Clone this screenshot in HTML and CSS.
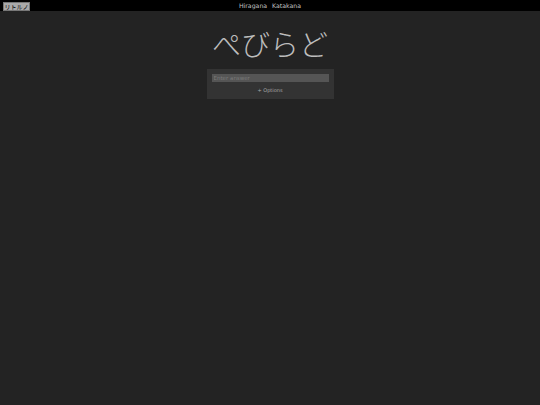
FILE: index.html
```html
<!DOCTYPE html>
<html>
<head>
<meta charset="utf-8">
<link rel="stylesheet" href="styles.css">
</head>
<body>
<div class="topbar">
  <button class="back">リトルノ</button>
  <nav class="modes"><span>Hiragana</span><span>Katakana</span></nav>
</div>
<main class="main">
  <h1 class="kana">ぺびらど</h1>
  <div class="panel">
    <input class="answer" type="text" placeholder="Enter answer">
    <div class="options">+ Options</div>
  </div>
</main>
</body>
</html>
```
FILE: styles.css
```css
html, body {
  margin: 0;
  padding: 0;
  height: 100%;
}
body {
  background: #232323;
  font-family: "DejaVu Sans", "Noto Sans CJK JP", sans-serif;
  color: #ccc;
}
.topbar {
  position: relative;
  height: 11px;
  background: #000;
  display: flex;
  justify-content: center;
  align-items: center;
}
.back {
  position: absolute;
  left: 3px;
  top: 2px;
  height: 9px;
  width: 27px;
  padding: 0;
  margin: 0;
  border: 1px solid #777;
  background: #a9a9a9;
  color: #000;
  font-family: "Noto Sans CJK JP", sans-serif;
  font-size: 6px;
  line-height: 7px;
}
.modes {
  display: flex;
  gap: 5px;
  font-size: 6.2px;
  color: #c4c4c4;
  margin-top: -1px;
}
.main {
  display: flex;
  flex-direction: column;
  align-items: center;
}
.kana {
  margin: 11px 0 0 0;
  font-family: "Noto Sans CJK JP", sans-serif;
  font-weight: 300;
  font-size: 29px;
  line-height: 42px;
  color: #bdbdbd;
  height: 47px;
}
.panel {
  width: 117px;
  padding: 5px 5px 4px;
  background: #333;
  display: flex;
  flex-direction: column;
  align-items: center;
  gap: 3px;
}
.answer {
  box-sizing: border-box;
  width: 117px;
  height: 8px;
  margin: 0;
  padding: 0 2px;
  border: none;
  background: #555;
  color: #ccc;
  font-family: "DejaVu Sans", sans-serif;
  font-size: 5.5px;
  outline: none;
}
.answer::placeholder {
  color: #7a7a7a;
}
.options {
  font-size: 5px;
  line-height: 10px;
  color: #aaa;
}
```
